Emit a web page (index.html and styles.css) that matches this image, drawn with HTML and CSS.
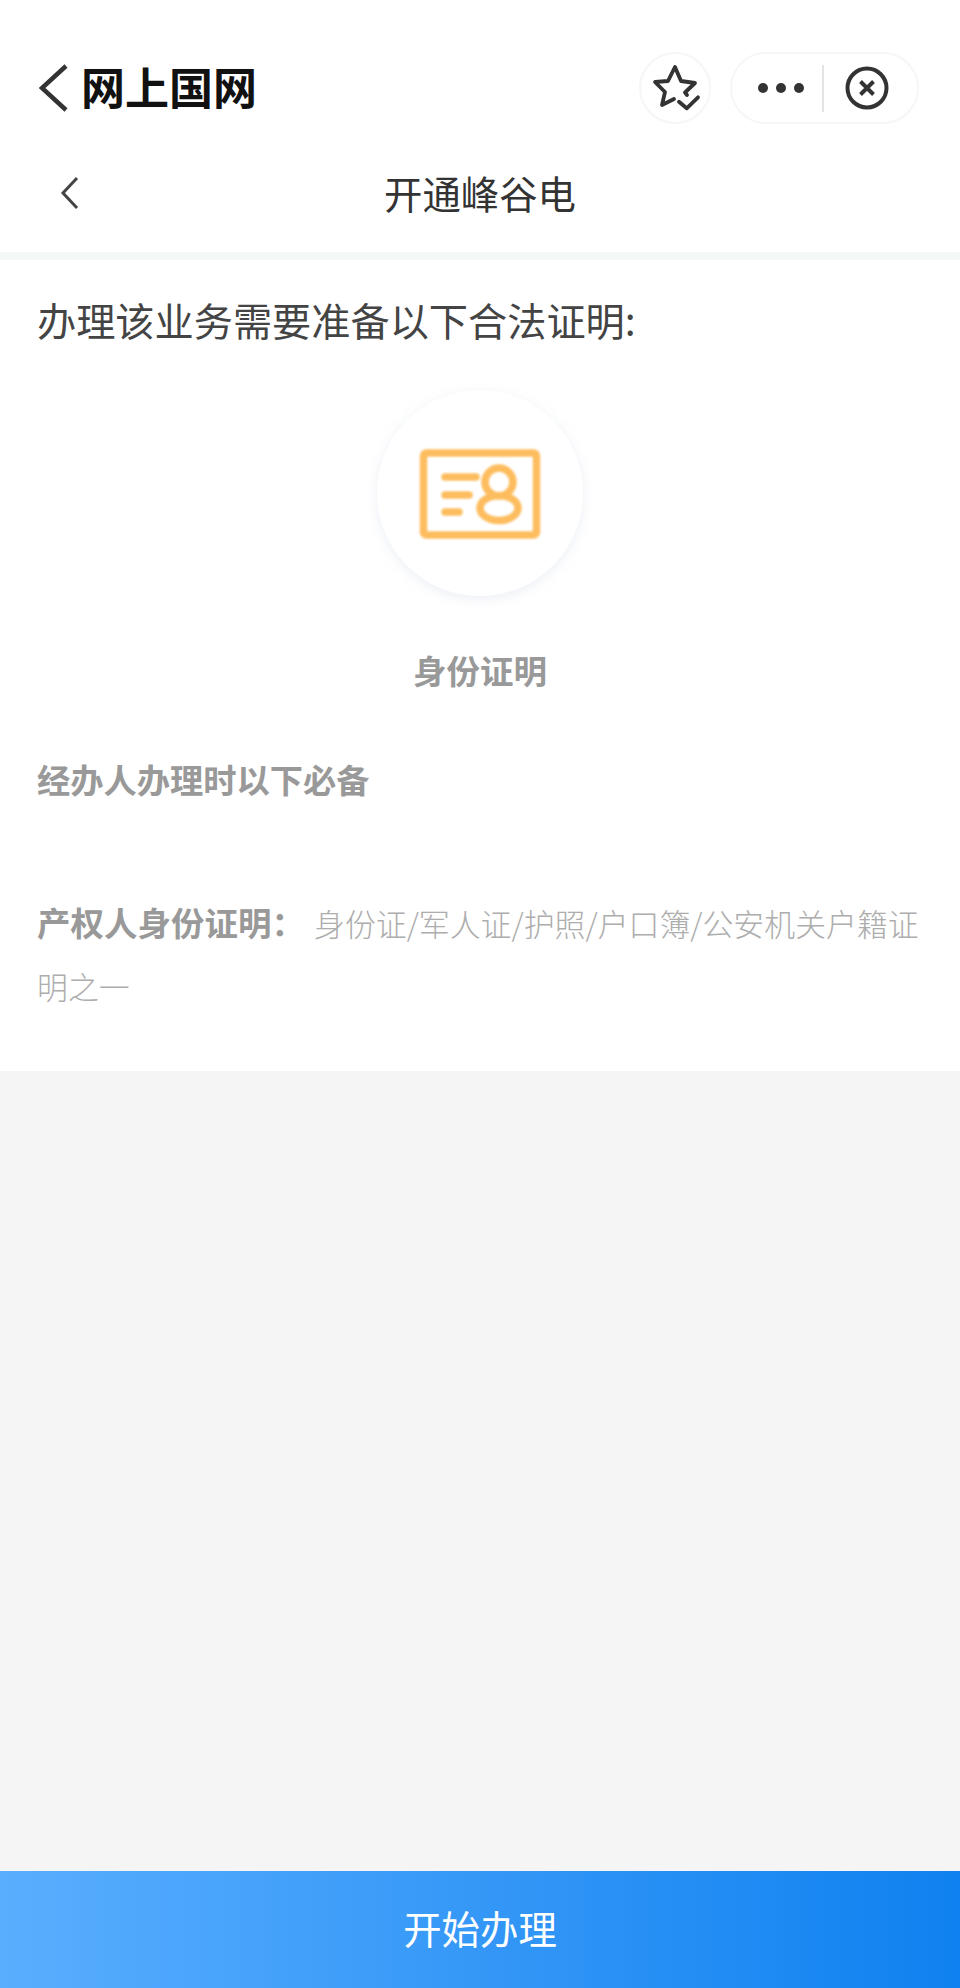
FILE: index.html
```html
<!DOCTYPE html>
<html lang="zh-CN">
<head>
	<meta charset="UTF-8">
	<title>开通峰谷电</title>
	<link rel="stylesheet" href="styles.css">
</head>
<body>
	<div id="page">
		<div class="topbar">
			<svg class="back" width="30" height="48" viewBox="0 0 30 48">
				<path d="M27 2 L3 24 L27 46" />
			</svg>
			<div class="app-name">网上国网</div>
			<div class="fav">
				<svg width="52" height="52" viewBox="0 0 52 52">
					<path d="M25 37 L13 43 L16 30 L6 20 L19 19 L26 5 L32 19 L46 21 L36 30.500 L38 33" />
					<path d="M30 39.700 L37.700 46.300 L49 35.300" />
				</svg>
			</div>
			<div class="capsule">
				<div class="dots">
					<span></span><span></span><span></span>
				</div>
				<div class="line"></div>
				<svg class="close" width="46" height="46" viewBox="0 0 46 46">
					<circle cx="23" cy="23" r="19.500" />
					<path d="M16.500 16.500 L29.500 29.500 M29.500 16.500 L16.500 29.500" />
				</svg>
			</div>
		</div>

		<div class="navbar">
			<svg class="nav-back" width="20" height="34" viewBox="0 0 20 34">
				<path d="M17 2 L3 17 L17 32" />
			</svg>
			<div class="nav-title">开通峰谷电</div>
		</div>

		<div class="content">
			<div class="intro">办理该业务需要准备以下合法证明:</div>
			<div class="cert">
				<div class="cert-circle">
					<svg width="126" height="96" viewBox="0 0 126 96">
						<rect x="6.500" y="7" width="113" height="82" rx="3" />
						<path class="rows" d="M28 31 H59 M28 49 H52 M28 66 H42" />
						<circle cx="82" cy="36" r="14" />
						<ellipse cx="82" cy="62" rx="19" ry="12.500" />
					</svg>
				</div>
				<div class="cert-name">身份证明</div>
			</div>
			<div class="must">经办人办理时以下必备</div>
			<div class="detail"><b>产权人身份证明：</b><span>身份证/军人证/护照/户口簿/公安机关户籍证明之一</span></div>
		</div>

		<div class="blank"></div>
		<div class="start">开始办理</div>
	</div>
</body>
</html>
```

FILE: styles.css
```css
*{
	padding: 0;
	margin: 0;
	box-sizing: border-box;
}
html,body{
	width: 100%;
	height: 100%;
}
body{
	font-family: "Noto Sans CJK SC", "Noto Sans", sans-serif;
	background-color: #fff;
}
#page{
	width: 960px;
	height: 1988px;
	display: flex;
	flex-direction: column;
}

/* top bar */
.topbar{
	height: 134px;
	padding: 52px 41px 10px 39px;
	display: flex;
	align-items: center;
}
.back{
	flex-shrink: 0;
	fill: none;
	stroke: #333;
	stroke-width: 4.5;
}
.app-name{
	margin-left: 12px;
	padding-bottom: 4px;
	flex-grow: 1;
	font-size: 44px;
	line-height: 68px;
	font-weight: bold;
	color: #111;
}
.fav{
	width: 72px;
	height: 72px;
	border: 2px solid #f6f6f6;
	border-radius: 50%;
	display: flex;
	justify-content: center;
	align-items: center;
}
.fav svg{
	fill: none;
	stroke: #333;
	stroke-width: 3.800;
	stroke-linejoin: round;
	stroke-linecap: round;
}
.capsule{
	width: 189px;
	height: 72px;
	margin-left: 19px;
	border: 2px solid #f6f6f6;
	border-radius: 36px;
	display: flex;
	align-items: center;
	padding-left: 26px;
}
.dots{
	width: 46px;
	display: flex;
	justify-content: space-between;
}
.dots span{
	width: 10px;
	height: 10px;
	border-radius: 50%;
	background-color: #333;
}
.line{
	width: 2px;
	height: 47px;
	margin-left: 18px;
	background-color: #e4e4e4;
}
.close{
	margin-left: 20px;
	fill: none;
	stroke: #333;
	stroke-width: 4;
}

/* page title */
.navbar{
	height: 126px;
	padding-bottom: 3px;
	border-bottom: 8px solid #f5f8f8;
	display: flex;
	justify-content: center;
	align-items: center;
	position: relative;
}
.nav-back{
	position: absolute;
	left: 60px;
	top: 42px;
	fill: none;
	stroke: #444;
	stroke-width: 3;
}
.nav-title{
	font-size: 38.400px;
	line-height: 52px;
	color: #333;
}

/* certificate list */
.content{
	height: 811px;
	padding: 0 37px;
	background-color: #fff;
}
.intro{
	margin-top: 33px;
	font-size: 39.200px;
	line-height: 52px;
	color: #444;
}
.cert{
	margin-top: 45px;
	display: flex;
	flex-direction: column;
	align-items: center;
}
.cert-circle{
	width: 206px;
	height: 206px;
	border-radius: 50%;
	background-color: #fff;
	box-shadow: 0 3px 12px rgba(200,210,225,0.35);
	display: flex;
	justify-content: center;
	align-items: center;
}
.cert-circle svg{
	margin-top: 2px;
	fill: none;
	stroke: #fdbd5f;
	stroke-width: 7.500;
	stroke-linecap: round;
	filter: blur(1px);
}
.cert-name{
	margin-top: 51px;
	font-size: 33.500px;
	line-height: 46px;
	font-weight: bold;
	color: #999;
}
.must{
	margin-top: 63px;
	font-size: 33.250px;
	line-height: 46px;
	font-weight: bold;
	color: #999;
}
.detail{
	margin-top: 88px;
	font-size: 30.900px;
	line-height: 63px;
	font-weight: 300;
	color: #adadad;
}
.detail b{
	font-size: 33.500px;
	font-weight: bold;
	color: #999;
	margin-right: 9px;
}

.blank{
	flex-grow: 1;
	background-color: #f5f5f5;
}
.start{
	height: 117px;
	background: linear-gradient(to right, #5aaefe, #0f81f0);
	color: #fff;
	font-size: 38.400px;
	line-height: 113px;
	text-align: center;
}
```
